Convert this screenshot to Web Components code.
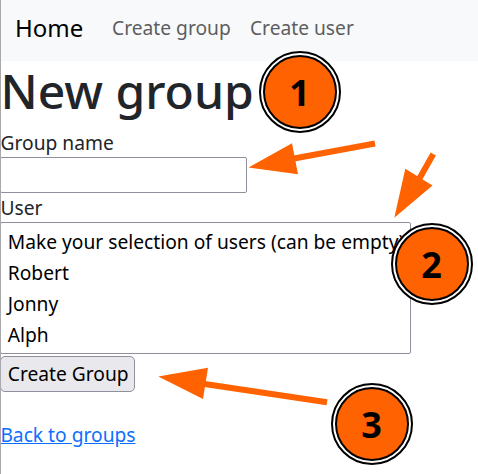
<!DOCTYPE html>
<html lang="en">
<head>
<meta charset="utf-8">
<title>New group</title>
<style>
html,body{margin:0;padding:0;background:#fff}
body{width:478px;height:474px;overflow:hidden;font:19.22px/29.25px "Noto Sans",sans-serif;color:#212529}
</style>
</head>
<body>
<group-page></group-page>
<script>
const define=(name,html,setup)=>customElements.define(name,class extends HTMLElement{
  constructor(){
    super();
    this.attachShadow({mode:'open'}).innerHTML=html;
  }
  connectedCallback(){ if(setup) setup(this,this.shadowRoot); }
});

define('nav-bar',`<style>
:host{display:flex;align-items:center;height:61px;background:#f8f9fb;box-sizing:border-box;padding:0 0 5px 14.9px;gap:28.9px}
::slotted([slot=brand]){font-size:24px;color:#000;text-decoration:none}
nav{display:flex;gap:19.2px}
</style><slot name="brand"></slot><nav><slot></slot></nav>`);

define('nav-link',`<style>
:host{display:block;color:#5d5e5f;white-space:nowrap}
</style><slot></slot>`);

define('form-field',`<style>
:host{display:flex;flex-direction:column;align-items:flex-start}
label{height:29px;line-height:29px}
</style><label><slot name="label"></slot></label><slot></slot>`);

define('text-box',`<style>
:host{display:block}
input{display:block;box-sizing:border-box;width:247px;height:36px;margin:0;border:1.4px solid #8f8f9d;border-radius:2px;background:#fff;font:inherit;outline:none}
</style><input type="text" aria-label="Group name">`);

define('option-list',`<style>
:host{display:block;box-sizing:border-box;width:411.4px;height:132px;border:1.4px solid #8f8f9d;border-radius:2px;background:#fff;color:#000;padding:3px 6.8px;white-space:nowrap}
::slotted(*){height:31px;line-height:31px}
</style><slot></slot>`);

define('push-button',`<style>
:host{display:block}
button{display:block;box-sizing:border-box;width:135.4px;height:36px;margin:0;padding:0 0 0 1px;border:1.4px solid #8f8f9d;border-radius:5px;background:#e9e9ed;color:#000;font:inherit;line-height:34px;white-space:nowrap}
</style><button type="button"><slot></slot></button>`);

define('step-badge',`<style>
:host{position:absolute;width:82px;height:82px}
svg{display:block}
text{font:bold 36px "Noto Sans",sans-serif;text-anchor:middle}
</style><svg width="82" height="82" viewBox="0 0 82 82"><circle cx="41" cy="41" r="40" fill="#fff" stroke="#000" stroke-width="2"/><circle cx="41" cy="41" r="36" fill="#ff6200" stroke="#000" stroke-width="2"/><text x="40.6" y="54.5"></text></svg>`,
(host,root)=>{
  host.style.left=host.getAttribute('x')-41+'px';
  host.style.top=host.getAttribute('y')-41+'px';
  root.querySelector('text').textContent=host.getAttribute('step');
});

define('arrow-layer',`<style>
:host{position:absolute;left:0;top:0;width:478px;height:474px;pointer-events:none}
</style><svg width="478" height="474" fill="#ff6200" stroke="#ff6200">
<path stroke-width="6" d="M375 143.5L294 158.5M433.3 154L418 181M327 402.3L203 383.8"/>
<path stroke="none" d="M248.5 167.5L292 143.3L298 174.3ZM394.3 217.8L405.3 168.8L432.5 185.5ZM158.3 376.5L208 367.7L203 399Z"/>
</svg>`);

define('group-page',`<style>
:host{display:block;position:relative;width:478px;height:474px;overflow:hidden}
:host::before{content:"";position:absolute;left:0;top:0;width:1px;height:474px;background:#aaaaae}
h1{margin:0 0 7px;padding-left:.4px;font-size:48px;font-weight:500;line-height:60px;white-space:nowrap}
span[slot=label]{padding-left:.5px}
form{margin:0}
.submit{margin-top:2px}
a.back{display:inline-block;margin-top:28px;padding-left:.4px;color:#0d6efd;text-decoration:underline}
</style>
<nav-bar><span slot="brand">Home</span><nav-link>Create group</nav-link><nav-link>Create user</nav-link></nav-bar>
<h1>New group</h1>
<form>
<form-field><span slot="label">Group name</span><text-box></text-box></form-field>
<form-field><span slot="label">User</span><option-list><div>Make your selection of users (can be empty)</div><div>Robert</div><div>Jonny</div><div>Alph</div></option-list></form-field>
<push-button class="submit">Create Group</push-button>
</form>
<a class="back">Back to groups</a>
<arrow-layer></arrow-layer>
<step-badge step="1" x="300" y="92"></step-badge>
<step-badge step="2" x="432" y="264"></step-badge>
<step-badge step="3" x="372" y="424"></step-badge>`);
</script>
</body>
</html>
